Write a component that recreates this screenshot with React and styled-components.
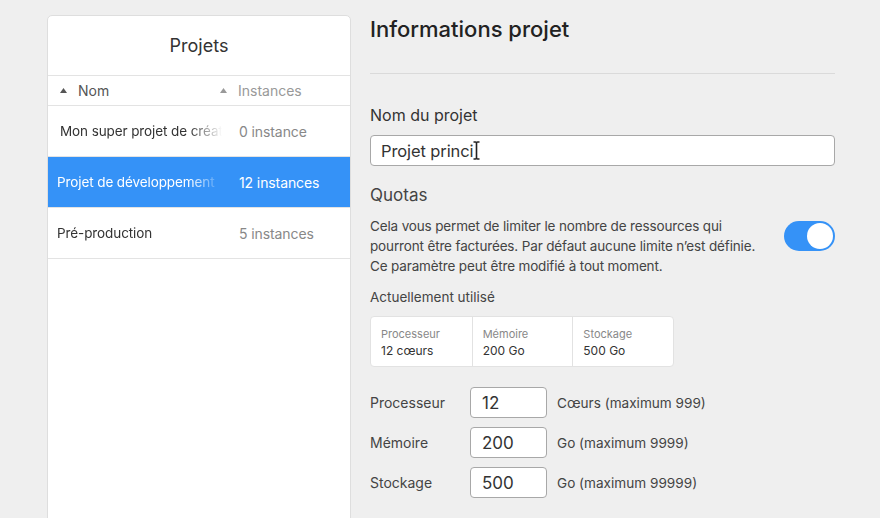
import React from 'react';
import styled, { createGlobalStyle } from 'styled-components';

const GlobalStyle = createGlobalStyle`
	html, body {
		margin: 0;
		padding: 0;
		background: #efefef;
		font-family: Inter, 'Noto Sans', 'Liberation Sans', sans-serif;
		color: #333;
		-webkit-font-smoothing: antialiased;
	}
`;

const projects = [
	{ name: 'Mon super projet de création', count: '0 instance', indent: true },
	{ name: 'Projet de développement', count: '12 instances', selected: true },
	{ name: 'Pré-production', count: '5 instances' },
];

const usage = [
	{ label: 'Processeur', value: '12 cœurs' },
	{ label: 'Mémoire', value: '200 Go' },
	{ label: 'Stockage', value: '500 Go' },
];

const limits = [
	{ label: 'Processeur', value: '12', unit: 'Cœurs (maximum 999)' },
	{ label: 'Mémoire', value: '200', unit: 'Go (maximum 9999)' },
	{ label: 'Stockage', value: '500', unit: 'Go (maximum 99999)' },
];

const SortArrow = ({ muted }) => (
	<svg width="7" height="5" viewBox="0 0 7 5">
		<path d="M3.5 0 L7 5 L0 5 Z" fill={muted ? '#999' : '#555'} />
	</svg>
);

const IBeam = () => (
	<Cursor width="7" height="19" viewBox="0 0 7 19">
		<path
			d="M0.5 1 H2.5 Q3.5 1 3.5 2.5 Q3.5 1 4.5 1 H6.5 M3.5 2.5 V16.5 Q3.5 18 2.5 18 H0.5 M3.5 16.5 Q3.5 18 4.5 18 H6.5"
			fill="none"
			stroke="#222"
			strokeWidth="1.6"
		/>
	</Cursor>
);

export default function App() {
	return (
		<>
			<GlobalStyle />
			<Page>
				<Sidebar>
					<SBTitle>Projets</SBTitle>
					<HeadRow>
						<HeadCell>
							<SortArrow />
							Nom
						</HeadCell>
						<HeadCell muted>
							<SortArrow muted />
							Instances
						</HeadCell>
					</HeadRow>
					{projects.map((p) => (
						<ProjectRow key={p.name} selected={p.selected}>
							<NameCell>
								<Fade indent={p.indent}>{p.name}</Fade>
							</NameCell>
							<CountCell selected={p.selected}>{p.count}</CountCell>
						</ProjectRow>
					))}
				</Sidebar>

				<Details>
					<Title>Informations projet</Title>
					<Divider />
					<FieldLabel>Nom du projet</FieldLabel>
					<NameField>
						<NameInput readOnly value="Projet princi" />
						<IBeam />
					</NameField>
					<SectionTitle>Quotas</SectionTitle>
					<QuotaRow>
						<Paragraph>
							Cela vous permet de limiter le nombre de ressources qui
							pourront être facturées. Par défaut aucune limite n’est définie.
							Ce paramètre peut être modifié à tout moment.
						</Paragraph>
						<Toggle>
							<Knob />
						</Toggle>
					</QuotaRow>
					<SubTitle>Actuellement utilisé</SubTitle>
					<UsageCard>
						{usage.map((u) => (
							<UsageCell key={u.label}>
								<UsageLabel>{u.label}</UsageLabel>
								<UsageValue>{u.value}</UsageValue>
							</UsageCell>
						))}
					</UsageCard>
					<LimitList>
						{limits.map((l) => (
							<LimitRow key={l.label}>
								<LimitLabel>{l.label}</LimitLabel>
								<LimitInput readOnly value={l.value} />
								<Unit>{l.unit}</Unit>
							</LimitRow>
						))}
					</LimitList>
				</Details>
			</Page>
		</>
	);
}

const Page = styled.div`
	display: flex;
	align-items: flex-start;
	gap: 19px;
	height: 518px;
	overflow: hidden;
	padding-left: 47px;
	box-sizing: border-box;
`;

const Sidebar = styled.div`
	flex: 0 0 304px;
	margin-top: 15px;
	height: 540px;
	box-sizing: border-box;
	background: #fff;
	border: 1px solid #dedede;
	border-radius: 5px;
	overflow: hidden;
`;

const SBTitle = styled.div`
	height: 59px;
	display: flex;
	align-items: center;
	justify-content: center;
	font-size: 18px;
	color: #333;
	border-bottom: 1px solid #e3e3e3;
`;

const HeadRow = styled.div`
	display: grid;
	grid-template-columns: 160px 1fr;
	height: 29px;
	padding-left: 12px;
	border-bottom: 1px solid #e3e3e3;
`;

const HeadCell = styled.div`
	display: flex;
	align-items: center;
	gap: 11px;
	font-size: 14px;
	color: ${(p) => (p.muted ? '#999' : '#555')};
`;

const ProjectRow = styled.div`
	display: grid;
	grid-template-columns: 182px 1fr;
	height: 50px;
	padding-left: 9px;
	align-items: center;
	font-size: 13.5px;
	letter-spacing: -0.1px;
	background: ${(p) => (p.selected ? '#3592f7' : '#fff')};
	color: ${(p) => (p.selected ? '#fff' : '#333')};
	border-bottom: 1px solid #e3e3e3;
	&:first-of-type {
		height: 49px;
	}
`;

const NameCell = styled.div`
	padding-right: 17px;
	overflow: hidden;
`;

const Fade = styled.div`
	white-space: nowrap;
	overflow: hidden;
	padding-left: ${(p) => (p.indent ? '3px' : '0')};
	-webkit-mask-image: linear-gradient(to right, #000 80%, transparent 100%);
	mask-image: linear-gradient(to right, #000 80%, transparent 100%);
`;

const CountCell = styled.div`
	font-size: 14px;
	color: ${(p) => (p.selected ? '#fff' : '#888')};
`;

const Details = styled.div`
	flex: 0 0 465px;
	display: flex;
	flex-direction: column;
`;

const Title = styled.h1`
	margin: 14px 0 0;
	font-size: 22px;
	line-height: 30px;
	font-weight: 500;
	color: #222;
`;

const Divider = styled.hr`
	margin: 29px 0 0;
	border: 0;
	height: 1px;
	background: #dadada;
`;

const FieldLabel = styled.div`
	margin-top: 30px;
	font-size: 16px;
	line-height: 22px;
	color: #333;
`;

const NameField = styled.div`
	position: relative;
	margin-top: 9px;
`;

const NameInput = styled.input`
	display: block;
	width: 100%;
	height: 31px;
	box-sizing: border-box;
	padding: 0 10px;
	border: 1px solid #a8a8a8;
	border-radius: 4px;
	background: #fff;
	font: inherit;
	font-size: 16.5px;
	letter-spacing: -0.1px;
	color: #333;
	outline: none;
`;

const Cursor = styled.svg`
	position: absolute;
	left: 103px;
	top: 6px;
`;

const SectionTitle = styled.div`
	margin-top: 17px;
	font-size: 17px;
	line-height: 24px;
	color: #444;
`;

const QuotaRow = styled.div`
	display: flex;
	justify-content: space-between;
	align-items: flex-start;
	margin-top: 9px;
`;

const Paragraph = styled.p`
	margin: 0;
	width: 395px;
	font-size: 13.5px;
	letter-spacing: -0.15px;
	line-height: 20px;
	color: #444;
`;

const Toggle = styled.div`
	margin-top: 5px;
	width: 51px;
	height: 30px;
	box-sizing: border-box;
	padding: 2px;
	border-radius: 15px;
	background: #3592f7;
	display: flex;
	justify-content: flex-end;
`;

const Knob = styled.div`
	width: 26px;
	height: 26px;
	border-radius: 50%;
	background: #fff;
`;

const SubTitle = styled.div`
	margin-top: 12px;
	font-size: 13.5px;
	line-height: 18px;
	color: #444;
`;

const UsageCard = styled.div`
	margin-top: 10px;
	width: 304px;
	height: 51px;
	box-sizing: border-box;
	display: grid;
	grid-template-columns: repeat(3, 1fr);
	background: #fff;
	border: 1px solid #e2e2e2;
	border-radius: 4px;
`;

const UsageCell = styled.div`
	padding: 9px 10px 0;
	& + & {
		border-left: 1px solid #e2e2e2;
	}
`;

const UsageLabel = styled.div`
	font-size: 11px;
	line-height: 16px;
	color: #888;
`;

const UsageValue = styled.div`
	font-size: 12px;
	line-height: 18px;
	color: #333;
`;

const LimitList = styled.div`
	margin-top: 20px;
	display: flex;
	flex-direction: column;
	gap: 9px;
`;

const LimitRow = styled.div`
	display: flex;
	align-items: center;
	height: 31px;
`;

const LimitLabel = styled.div`
	width: 100px;
	font-size: 14px;
	color: #444;
`;

const LimitInput = styled.input`
	width: 77px;
	height: 31px;
	box-sizing: border-box;
	padding: 0 11px;
	border: 1px solid #a8a8a8;
	border-radius: 4px;
	background: #fff;
	font: inherit;
	font-size: 17px;
	color: #333;
	outline: none;
`;

const Unit = styled.div`
	margin-left: 10px;
	font-size: 13.6px;
	color: #444;
`;
